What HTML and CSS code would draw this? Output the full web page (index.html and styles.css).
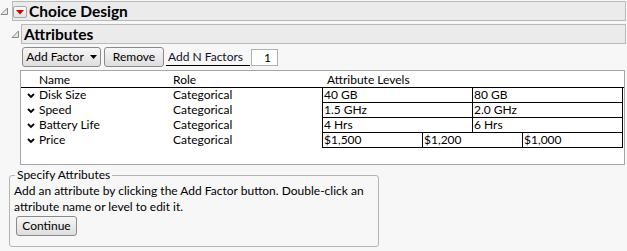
FILE: index.html
```html
<!DOCTYPE html>
<html>
<head>
<meta charset="utf-8">
<link rel="stylesheet" href="styles.css">
</head>
<body>
<div class="outline">
  <div class="head-row top">
    <span class="disc"><svg width="9" height="9" viewBox="0 0 9 9"><polygon points="1,7.5 7.5,7.5 7.5,1" fill="#e6e6e6" stroke="#8a8a8a" stroke-width="1"/></svg></span>
    <div class="ol-header">
      <span class="redbtn"><svg width="8" height="5" viewBox="0 0 8 5"><polygon points="0,0 8,0 4,4.5" fill="#d00000"/></svg></span>
      <span class="title">Choice Design</span>
    </div>
  </div>
  <div class="ol-content">
    <div class="outline inner">
      <div class="head-row">
        <span class="disc small"><svg width="9" height="9" viewBox="0 0 9 9"><polygon points="1,7.5 7.5,7.5 7.5,1" fill="#e6e6e6" stroke="#8a8a8a" stroke-width="1"/></svg></span>
        <div class="ol-header">
          <span class="title sub">Attributes</span>
        </div>
      </div>
      <div class="attr-body">
        <div class="toolbar">
          <button class="btn addf">Add Factor <svg width="7" height="4" viewBox="0 0 7 4"><polygon points="0,0 7,0 3.5,4" fill="#000"/></svg></button>
          <button class="btn remove">Remove</button>
          <span class="nlabel">Add N Factors</span>
          <span class="ninput">1</span>
        </div>
        <div class="list">
          <div class="row head">
            <span></span><span class="c">Name</span><span class="c">Role</span><span class="c lvh">Attribute Levels</span>
          </div>
          <div class="row">
            <span class="chev"><svg width="8" height="6" viewBox="0 0 8 6"><polyline points="1,1 4,4 7,1" fill="none" stroke="#000" stroke-width="1.8"/></svg></span>
            <span class="c">Disk Size</span><span class="c">Categorical</span>
            <span class="levels two"><span class="lv">40 GB</span><span class="lv">80 GB</span></span>
          </div>
          <div class="row">
            <span class="chev"><svg width="8" height="6" viewBox="0 0 8 6"><polyline points="1,1 4,4 7,1" fill="none" stroke="#000" stroke-width="1.8"/></svg></span>
            <span class="c">Speed</span><span class="c">Categorical</span>
            <span class="levels two"><span class="lv">1.5 GHz</span><span class="lv">2.0 GHz</span></span>
          </div>
          <div class="row">
            <span class="chev"><svg width="8" height="6" viewBox="0 0 8 6"><polyline points="1,1 4,4 7,1" fill="none" stroke="#000" stroke-width="1.8"/></svg></span>
            <span class="c">Battery Life</span><span class="c">Categorical</span>
            <span class="levels two"><span class="lv">4 Hrs</span><span class="lv">6 Hrs</span></span>
          </div>
          <div class="row">
            <span class="chev"><svg width="8" height="6" viewBox="0 0 8 6"><polyline points="1,1 4,4 7,1" fill="none" stroke="#000" stroke-width="1.8"/></svg></span>
            <span class="c">Price</span><span class="c">Categorical</span>
            <span class="levels three"><span class="lv">$1,500</span><span class="lv">$1,200</span><span class="lv">$1,000</span></span>
          </div>
        </div>
      </div>
    </div>
    <fieldset class="spec">
      <legend>Specify Attributes</legend>
      <p class="help">Add an attribute by clicking the Add Factor button. Double-click an attribute name or level to edit it.</p>
      <button class="btn cont">Continue</button>
    </fieldset>
  </div>
</div>
</body>
</html>
```
FILE: styles.css
```css
html, body {
  margin: 0;
  background: #f7f7f7;
}
body {
  font-family: Lato, "Liberation Sans", sans-serif;
  font-size: 12px;
  line-height: 16px;
  color: #000;
  width: 627px;
  height: 251px;
  overflow: hidden;
}
.head-row {
  display: flex;
  align-items: flex-start;
}
.head-row.top {
  margin-top: 1px;
}
.disc {
  width: 12px;
  flex: none;
  display: flex;
  padding-top: 6px;
}
.disc.small {
  width: 10px;
}
.disc svg {
  display: block;
}
.ol-header {
  flex: 1;
  height: 18px;
  border: 1px solid #b9b9b9;
  background: #ebebeb;
  margin-right: 1px;
  display: flex;
  align-items: center;
}
.redbtn {
  width: 12px;
  height: 10px;
  border: 1px solid #a8a8a8;
  border-radius: 2px;
  background: linear-gradient(#fafafa, #e4e4e4);
  display: flex;
  align-items: center;
  justify-content: center;
  margin-top: 2px;
}
.redbtn svg {
  display: block;
}
.title {
  font-weight: bold;
  font-size: 15.5px;
  margin-left: 2px;
}
.title.sub {
  margin-left: 2px;
}
.inner {
  margin-left: 11px;
  margin-top: 3px;
}
.toolbar {
  display: flex;
  align-items: flex-start;
  margin-top: 3px;
  margin-left: 11px;
  height: 20px;
}
.btn {
  font-family: inherit;
  font-size: 12px;
  line-height: 16px;
  color: #000;
  height: 20px;
  box-sizing: border-box;
  border: 1px solid #8a8a8a;
  border-radius: 3px;
  background: linear-gradient(#f6f6f6, #dedede);
  padding: 0;
  display: flex;
  align-items: center;
  justify-content: center;
}
.addf {
  width: 79px;
  gap: 6px;
}
.addf svg {
  display: block;
}
.remove {
  width: 60px;
  margin-left: 3px;
}
.nlabel {
  margin-left: 2px;
  width: 84px;
  box-sizing: border-box;
  padding-left: 2px;
  border-bottom: 1px solid #000;
  height: 19px;
  line-height: 19px;
  color: #101030;
}
.ninput {
  margin-left: 1px;
  margin-top: 2px;
  width: 27px;
  height: 17px;
  box-sizing: border-box;
  border: 1px solid #b0b0b0;
  background: #fff;
  text-align: right;
  padding-right: 6px;
  line-height: 15px;
}
.list {
  margin: 3px 2px 0 9px;
  height: 95px;
  box-sizing: border-box;
  border: 1px solid #a5a5a5;
  background: #fff;
}
.row {
  display: grid;
  grid-template-columns: 18px 134px 149px 301px;
  height: 15px;
  line-height: 14px;
}
.row.head {
  height: 17px;
  line-height: 17px;
  border-bottom: 1px solid #000;
  box-sizing: border-box;
}
.lvh {
  padding-left: 5px;
}
.chev {
  display: flex;
  align-items: center;
  padding-left: 6px;
  padding-top: 1px;
}
.chev svg {
  display: block;
}
.levels {
  display: flex;
  border-left: 1px solid #000;
}
.lv {
  box-sizing: border-box;
  height: 15px;
  border-right: 1px solid #000;
  border-bottom: 1px solid #000;
  padding-left: 1px;
}
.two .lv {
  width: 150px;
}
.three .lv {
  width: 100px;
}
.spec {
  margin: 2px 0 0 9px;
  width: 370px;
  box-sizing: border-box;
  border: 1px solid #b4b4b4;
  border-radius: 3px;
  padding: 0 4px 10px 4px;
}
.spec legend {
  padding: 0 2px;
  margin-left: 1px;
  line-height: 16px;
}
.help {
  margin: 0;
}
.cont {
  width: 61px;
  margin: 1px 0 0 2px;
}
```
